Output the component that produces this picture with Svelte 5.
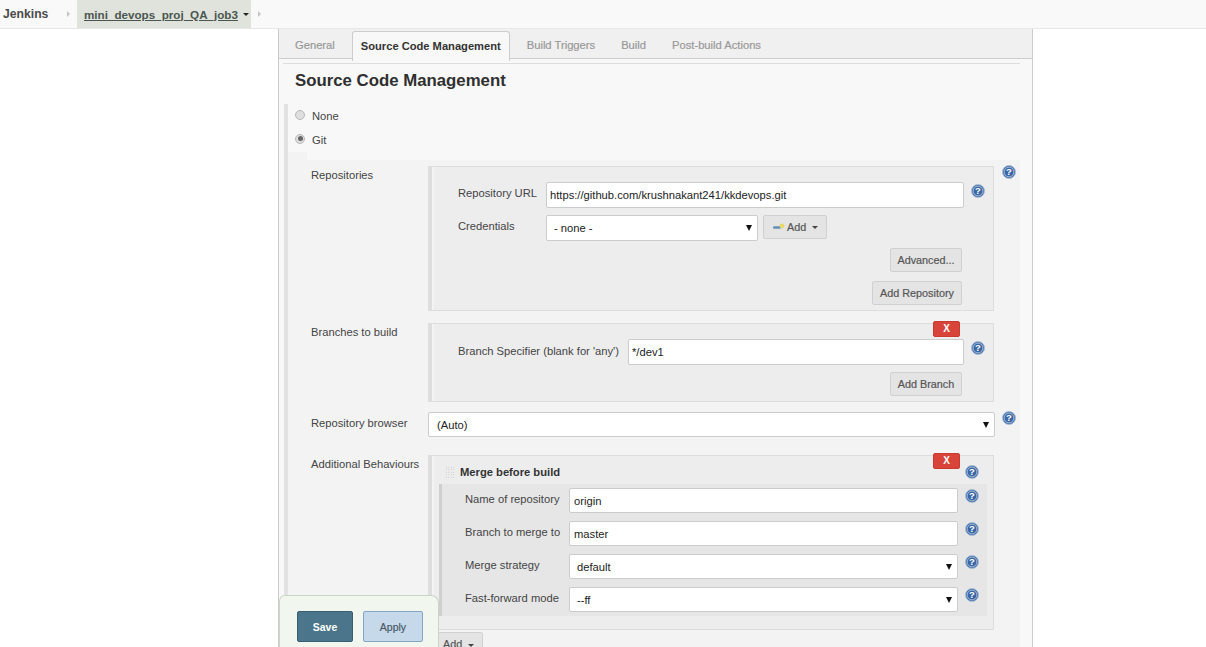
<script>
  const tabs = ['General', 'Source Code Management', 'Build Triggers', 'Build', 'Post-build Actions'];
  const merge = [
    { label: 'Name of repository', value: 'origin' },
    { label: 'Branch to merge to', value: 'master' },
    { label: 'Merge strategy', value: 'default', select: true },
    { label: 'Fast-forward mode', value: '--ff', select: true }
  ];
</script>

{#snippet help()}
  <svg class="help" viewBox="0 0 14 14" aria-hidden="true">
    <circle cx="7" cy="7" r="6.5" fill="#3a67a3" stroke="#a9bfd9" stroke-width="1" />
    <circle cx="7" cy="7" r="4.9" fill="#3a67a3" stroke="#d5e0ee" stroke-width="0.7" />
    <text x="7" y="10.4" text-anchor="middle" font-size="9.5" font-weight="700" fill="#fff" font-family="Liberation Sans, sans-serif">?</text>
  </svg>
{/snippet}

<div class="topbar">
  <span class="crumb root">Jenkins</span>
  <span class="sep"></span>
  <span class="crumb job"><u>mini_devops_proj_QA_job3</u><i class="caret dark"></i></span>
  <span class="sep last"></span>
</div>

<div class="page">
  <div class="tabs">
    {#each tabs as tab, i}
      <span class="tab" class:active={i === 1}>{tab}</span>
    {/each}
  </div>
  <div class="tabline"></div>
  <h2>Source Code Management</h2>

  <div class="section">
    <div class="radio-row"><span class="radio"></span>None</div>
    <div class="radio-row"><span class="radio on"></span>Git</div>

    <div class="git">
      <div class="row repos">
        <div class="label">Repositories</div>
        <div class="block">
          <div class="box">
            <div class="field first">
              <span class="flabel url">Repository URL</span>
              <input class="text wide" value="https://github.com/krushnakant241/kkdevops.git" />
              {@render help()}
            </div>
            <div class="field creds">
              <span class="flabel url">Credentials</span>
              <div class="select cred"><span>- none -</span><i class="arrow"></i></div>
              <button class="btn add"><svg class="key" viewBox="0 0 12 8"><rect x="0" y="3.2" width="8" height="2.6" rx="1.2" fill="#5f8fb5" /><circle cx="9" cy="3" r="2.4" fill="#e6d96a" /></svg>Add<i class="caret"></i></button>
            </div>
            <div class="actions adv"><button class="btn">Advanced...</button></div>
            <div class="actions addrepo"><button class="btn">Add Repository</button></div>
          </div>
        </div>
        <div class="outer-help">{@render help()}</div>
      </div>

      <div class="row branches">
        <div class="label">Branches to build</div>
        <div class="block">
          <div class="box">
            <button class="del">X</button>
            <div class="field branch">
              <span class="flabel spec">Branch Specifier (blank for 'any')</span>
              <input class="text" value="*/dev1" />
              {@render help()}
            </div>
            <div class="actions addbranch"><button class="btn">Add Branch</button></div>
          </div>
        </div>
      </div>

      <div class="row browser">
        <div class="label">Repository browser</div>
        <div class="select full"><span>(Auto)</span><i class="arrow"></i></div>
        <div class="outer-help">{@render help()}</div>
      </div>

      <div class="row behaviours">
        <div class="label">Additional Behaviours</div>
        <div class="block">
          <div class="box mergebox">
            <button class="del">X</button>
            <div class="merge-head">
              <span class="handle"></span>
              <b>Merge before build</b>
              {@render help()}
            </div>
            <div class="merge-body">
              {#each merge as m}
                <div class="mfield">
                  <span class="mlabel">{m.label}</span>
                  {#if m.select}
                    <div class="select mselect"><span>{m.value}</span><i class="arrow"></i></div>
                  {:else}
                    <input class="text minput" value={m.value} />
                  {/if}
                  {@render help()}
                </div>
              {/each}
            </div>
          </div>
          <button class="btn add-behaviour">Add<i class="caret"></i></button>
        </div>
      </div>
    </div>
  </div>
</div>

<div class="savebar">
  <button class="save">Save</button>
  <button class="apply">Apply</button>
</div>

<style>
  :global(body) {
    background: #fff;
    overflow: hidden;
    font-family: "Liberation Sans", Arial, sans-serif;
    font-size: 12px;
    color: #333;
  }

  .topbar {
    height: 28px;
    background: #f9f9f9;
    border-bottom: 1px solid #e8e8e8;
    display: flex;
    align-items: stretch;
  }
  .crumb {
    display: flex;
    align-items: center;
    font-size: 12.2px;
    font-weight: 700;
    color: #4a4a4a;
  }
  .root {
    padding-left: 3px;
    width: 64px;
  }
  .sep {
    width: 10px;
    align-self: center;
    height: 7px;
    position: relative;
  }
  .sep::after {
    content: '';
    position: absolute;
    left: 0;
    top: 0;
    border-left: 3px solid #c4c4c4;
    border-top: 3px solid transparent;
    border-bottom: 3px solid transparent;
  }
  .job {
    background: #e0e3dc;
    padding: 0 2px 0 7px;
    margin-right: 7px;
    font-size: 11.65px;
    color: #4a5650;
  }
  .caret {
    display: inline-block;
    border-top: 3px solid #444;
    border-left: 3px solid transparent;
    border-right: 3px solid transparent;
    margin-left: 6px;
    vertical-align: middle;
  }
  .caret.dark {
    border-top-color: #222;
    margin-left: 5px;
  }

  .page {
    margin-left: 278px;
    width: 753px;
    height: 618px;
    overflow: hidden;
    background: #f8f8f8;
    border-left: 1px solid #ccc;
    border-right: 1px solid #ccc;
  }
  .tabs {
    height: 30px;
    padding: 2px 0 0 3px;
    box-sizing: border-box;
    display: flex;
    background: #f0f0f0;
    border-bottom: 1px solid #ccc;
  }
  .tab {
    padding: 0 13px;
    line-height: 29px;
    font-size: 11.2px;
    font-weight: 400;
    -webkit-text-stroke: 0.2px #999;
    color: #999;
    white-space: nowrap;
  }
  .tab.active {
    height: 29px;
    padding: 0 8px;
    margin: 0 4px 0 4px;
    background: #f8f8f8;
    color: #333;
    font-size: 11.15px;
    font-weight: 700;
    -webkit-text-stroke: 0;
    border: 1px solid #ccc;
    border-bottom: none;
    border-radius: 3px 3px 0 0;
  }
  .tabline {
    margin: 4px 12px 0 4px;
    border-top: 1px solid #ddd;
  }
  h2 {
    margin: 7px 0 0 16px;
    font-size: 16.8px;
    line-height: 20px;
    font-weight: 700;
    color: #2f2f2f;
  }

  .section {
    margin: 13px 0 0 5px;
    border-left: 4px solid #e2e2e2;
  }
  .radio-row {
    height: 24px;
    display: flex;
    align-items: center;
    padding-left: 7px;
    gap: 7px;
    font-size: 11.2px;
    color: #444;
  }
  .radio {
    width: 8px;
    height: 8px;
    border-radius: 50%;
    border: 1px solid #b8b8b8;
    background: #dedede;
    margin-top: -3px;
    position: relative;
  }
  .radio.on::after {
    content: '';
    position: absolute;
    inset: 1.5px;
    border-radius: 50%;
    background: #666;
  }

  .git {
    margin-top: 8px;
    position: relative;
    background: #f3f3f3;
    padding: 6px 0 0 23px;
    width: 709px;
    box-sizing: content-box;
  }
  .git::before {
    content: '';
    position: absolute;
    left: 0;
    top: -8px;
    width: 19px;
    height: 8px;
    background: #f3f3f3;
  }
  .row {
    display: flex;
    position: relative;
    font-size: 11.2px;
  }
  .label {
    width: 117px;
    flex: none;
    padding-top: 3px;
    color: #444;
    line-height: 13px;
    white-space: nowrap;
  }
  .block {
    flex: none;
    width: 566px;
  }
  .box {
    position: relative;
    box-sizing: border-box;
    width: 566px;
    background: #ededed;
    border: 1px solid #ddd;
    border-left: 4px solid #dedede;
    box-shadow: inset 2px 0 0 #f3f3f3;
  }
  .outer-help {
    position: absolute;
    left: 691px;
    top: -1px;
    line-height: 0;
  }
  .repos .box {
    height: 145px;
    padding: 15px 0 0 26px;
  }
  .branches {
    margin-top: 12px;
  }
  .branches .box {
    height: 79px;
    padding: 15px 0 0 26px;
  }
  .browser {
    margin-top: 10px;
    height: 25px;
  }
  .browser .label {
    padding-top: 5px;
  }
  .behaviours {
    margin-top: 18px;
  }

  .field {
    display: flex;
    align-items: flex-start;
    position: relative;
  }
  .flabel {
    color: #444;
    line-height: 13px;
    white-space: nowrap;
    padding-top: 5px;
  }
  .flabel.url {
    width: 88px;
  }
  .flabel.spec {
    width: 170px;
    padding-top: 6px;
  }
  .text {
    box-sizing: border-box;
    height: 26px;
    border: 1px solid #ccc;
    border-radius: 2px;
    background: #fff;
    padding: 2px 3px;
    font-family: inherit;
    font-size: 11.2px;
    color: #222;
    outline: none;
  }
  .text.wide {
    width: 418px;
  }
  .branch .text {
    width: 336px;
  }
  .help {
    width: 14px;
    height: 14px;
    flex: none;
    margin: 2px 0 0 7px;
  }
  .outer-help .help {
    margin: 0;
  }
  .creds {
    margin-top: 7px;
  }
  .select {
    box-sizing: border-box;
    height: 26px;
    background: #fff;
    border: 1px solid #ccc;
    border-radius: 2px;
    display: flex;
    align-items: center;
    justify-content: space-between;
    font-size: 11.2px;
    color: #222;
    padding: 0 5px 0 7px;
  }
  .select.cred {
    width: 212px;
  }
  .select.full {
    width: 567px;
    height: 25px;
    flex: none;
    padding-left: 8px;
  }
  .arrow {
    display: block;
    border-top: 6px solid #111;
    border-left: 3px solid transparent;
    border-right: 3px solid transparent;
  }
  .btn {
    box-sizing: border-box;
    height: 24px;
    padding: 0 8px;
    background: #e4e4e4;
    border: 1px solid #d0d0d0;
    border-radius: 2px;
    font-family: inherit;
    font-size: 10.8px;
    -webkit-text-stroke: 0.2px #555;
    color: #555;
    white-space: nowrap;
  }
  .btn.add {
    margin-left: 5px;
    width: 64px;
    padding: 0 0 0 9px;
    display: flex;
    align-items: center;
  }
  .key {
    width: 12px;
    height: 8px;
    margin-right: 2px;
  }
  .actions {
    display: flex;
    justify-content: flex-end;
    width: 504px;
  }
  .adv {
    margin-top: 7px;
  }
  .adv .btn {
    width: 72px;
    padding: 0;
  }
  .addrepo {
    margin-top: 9px;
  }
  .addrepo .btn {
    width: 90px;
    padding: 0;
  }
  .addbranch {
    margin-top: 7px;
  }
  .addbranch .btn {
    width: 72px;
    padding: 0;
  }
  .del {
    position: absolute;
    right: 33px;
    top: -3px;
    width: 27px;
    height: 16px;
    padding: 0;
    background: #d9443a;
    border: 1px solid #cb3a30;
    border-radius: 2px;
    color: #fff;
    font-family: inherit;
    font-size: 10px;
    font-weight: 700;
    line-height: 12px;
  }

  .mergebox {
    height: 175px;
    padding: 9px 0 0 7px;
  }
  .merge-head {
    display: flex;
    align-items: center;
    height: 13px;
    padding-left: 6px;
    font-size: 11.2px;
    color: #333;
    position: relative;
  }
  .handle {
    width: 10px;
    height: 12px;
    margin-right: 5px;
    background-image: radial-gradient(#bbb 0.6px, transparent 0.7px);
    background-size: 2.5px 2.5px;
  }
  .merge-head .help {
    margin: 1px 0 0 0;
    position: absolute;
    left: 526px;
  }
  .merge-body {
    margin-top: 6px;
    width: 548px;
    height: 132px;
    box-sizing: border-box;
    background: #e6e6e6;
    border-left: 3px solid #cfcfcf;
    padding: 4px 0 0 23px;
    display: flex;
    flex-direction: column;
    gap: 8px;
  }
  .mfield {
    display: flex;
    align-items: flex-start;
    height: 25px;
  }
  .mfield .help {
    margin-top: 1px;
  }
  .mlabel {
    width: 104px;
    flex: none;
    padding-top: 5px;
    line-height: 13px;
    color: #444;
    white-space: nowrap;
  }
  .minput,
  .mselect {
    width: 389px;
    height: 25px;
    flex: none;
  }
  .minput {
    padding-left: 4px;
  }
  .mselect {
    padding-left: 7px;
  }
  .add-behaviour {
    margin: 2px 0 0 10px;
    height: 24px;
    width: 45px;
    padding: 0 0 0 4px;
    text-align: left;
  }

  .savebar {
    position: fixed;
    left: 279px;
    bottom: 0;
    width: 160px;
    height: 52px;
    padding: 15px 0 0 17px;
    box-sizing: border-box;
    display: flex;
    gap: 10px;
    align-items: flex-start;
    background: #f1f6ee;
    border: 1px solid #c9d6c6;
    border-bottom: none;
    border-radius: 6px 8px 0 0;
  }
  .save,
  .apply {
    height: 31px;
    box-sizing: border-box;
    border-radius: 2px;
    font-family: inherit;
    font-size: 10.5px;
    padding: 0;
  }
  .save {
    width: 56px;
    background: #4b758b;
    border: 1px solid #3a5f73;
    font-weight: 700;
    color: #fff;
  }
  .apply {
    width: 60px;
    background: #c6d9ea;
    border: 1px solid #86a7c4;
    -webkit-text-stroke: 0.2px #4b5a68;
    color: #4b5a68;
  }
</style>
